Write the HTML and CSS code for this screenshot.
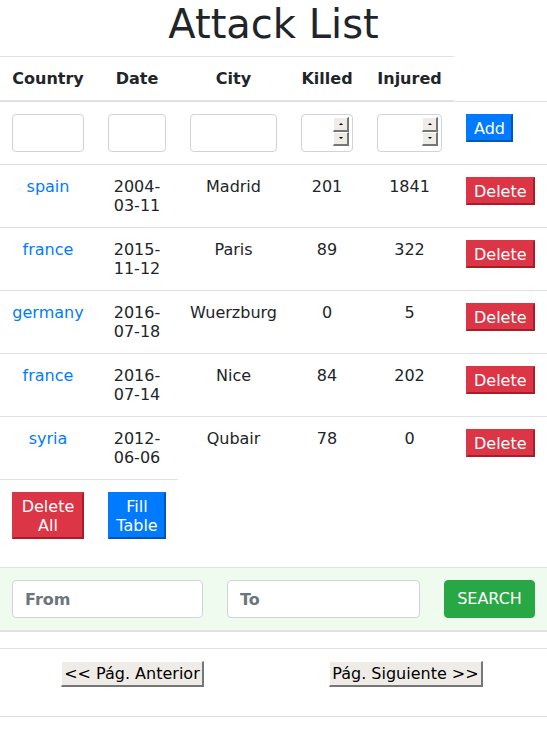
FILE: index.html
```html
<!DOCTYPE html>
<html lang="en">
<head>
<meta charset="utf-8">
<title>Attack List</title>
<link rel="stylesheet" href="styles.css">
</head>
<body>
<h1 class="title">Attack List</h1>

<table class="attacks">
  <colgroup>
    <col class="c-country"><col class="c-date"><col class="c-city"><col class="c-killed"><col class="c-injured"><col class="c-action">
  </colgroup>
  <thead>
    <tr>
      <th>Country</th><th>Date</th><th>City</th><th>Killed</th><th>Injured</th>
    </tr>
  </thead>
  <tbody>
    <tr>
      <td><input class="field" type="text"></td>
      <td><input class="field" type="text"></td>
      <td><input class="field" type="text"></td>
      <td>
        <div class="numbox">
          <input class="numfield" type="text">
          <div class="spin"><span class="spin-btn"><i class="up"></i></span><span class="spin-btn"><i class="down"></i></span></div>
        </div>
      </td>
      <td>
        <div class="numbox">
          <input class="numfield" type="text">
          <div class="spin"><span class="spin-btn"><i class="up"></i></span><span class="spin-btn"><i class="down"></i></span></div>
        </div>
      </td>
      <td class="action"><button class="btn-old blue">Add</button></td>
    </tr>
    <tr>
      <td><a href="#">spain</a></td><td>2004-03-11</td><td>Madrid</td><td>201</td><td>1841</td>
      <td class="action"><button class="btn-old red">Delete</button></td>
    </tr>
    <tr>
      <td><a href="#">france</a></td><td>2015-11-12</td><td>Paris</td><td>89</td><td>322</td>
      <td class="action"><button class="btn-old red">Delete</button></td>
    </tr>
    <tr>
      <td><a href="#">germany</a></td><td>2016-07-18</td><td>Wuerzburg</td><td>0</td><td>5</td>
      <td class="action"><button class="btn-old red">Delete</button></td>
    </tr>
    <tr>
      <td><a href="#">france</a></td><td>2016-07-14</td><td>Nice</td><td>84</td><td>202</td>
      <td class="action"><button class="btn-old red">Delete</button></td>
    </tr>
    <tr>
      <td><a href="#">syria</a></td><td>2012-06-06</td><td>Qubair</td><td>78</td><td>0</td>
      <td class="action"><button class="btn-old red">Delete</button></td>
    </tr>
    <tr>
      <td><button class="btn-old red">Delete All</button></td>
      <td><button class="btn-old blue">Fill Table</button></td>
    </tr>
  </tbody>
</table>

<div class="search">
  <input class="search-field" type="text" placeholder="From">
  <input class="search-field" type="text" placeholder="To">
  <button class="btn-search">SEARCH</button>
</div>

<table class="pager">
  <tr>
    <td class="pager-cell"><button class="btn-page">&lt;&lt; Pág. Anterior</button></td>
    <td class="pager-cell"><button class="btn-page">Pág. Siguiente &gt;&gt;</button></td>
  </tr>
  <tr>
    <td class="pager-empty"></td>
    <td class="pager-empty"></td>
  </tr>
</table>
</body>
</html>
```

FILE: styles.css
```css
html, body {
  margin: 0;
  padding: 0;
  background: #fff;
}
body {
  font-family: "DejaVu Sans", sans-serif;
  font-size: 16px;
  line-height: 19px;
  color: #212529;
}
.title {
  margin: 0 0 8px;
  font-size: 40px;
  font-weight: normal;
  line-height: 48px;
  text-align: center;
  color: #212529;
}

.attacks {
  width: 100%;
  table-layout: fixed;
  border-collapse: collapse;
  margin-bottom: 16px;
}
.c-country { width: 96px; }
.c-date { width: 82px; }
.c-city { width: 111px; }
.c-killed { width: 76px; }
.c-injured { width: 89px; }
.c-action { width: 93px; }

.attacks th,
.attacks td {
  padding: 12px;
  text-align: center;
  vertical-align: top;
  border-top: 1px solid #dee2e6;
}
.attacks td.action {
  text-align: left;
}
.attacks th {
  font-weight: bold;
  border-bottom: 2px solid #dee2e6;
}
.attacks a {
  color: #007bff;
  text-decoration: none;
}

.field {
  display: block;
  box-sizing: border-box;
  width: 100%;
  height: 38px;
  margin: 0;
  border: 1px solid #ced4da;
  border-radius: 4px;
  background: #fff;
  font: inherit;
  padding: 6px 12px;
}
.numbox {
  box-sizing: border-box;
  display: flex;
  width: 100%;
  height: 38px;
  border: 1px solid #ced4da;
  border-radius: 4px;
  background: #fff;
  padding: 2px 3px 5px 0;
}
.numfield {
  flex: 1;
  min-width: 0;
  border: 0;
  padding: 0;
  margin: 0;
  background: transparent;
  font: inherit;
}
.spin {
  display: flex;
  flex-direction: column;
  width: 16px;
}
.spin-btn {
  box-sizing: border-box;
  flex: 1;
  display: flex;
  align-items: center;
  justify-content: center;
  background: #efece8;
  border-style: solid;
  border-color: #fff #767676 #767676 #fff;
  border-width: 1px 2px 2px 1px;
}
.spin-btn i {
  width: 0;
  height: 0;
  border-left: 2px solid transparent;
  border-right: 2px solid transparent;
}
.spin-btn .up { border-bottom: 2px solid #000; }
.spin-btn .down { border-top: 2px solid #000; }

.btn-old {
  font: inherit;
  line-height: 19px;
  color: #fff;
  padding: 3px 6px 2px;
  margin: 0;
  border-width: 2px;
  border-style: solid;
  border-radius: 0;
  cursor: pointer;
}
.btn-old.red {
  background: #dc3545;
  border-color: #dc3545 #a71d2a #a71d2a #dc3545;
}
.btn-old.blue {
  background: #007bff;
  border-color: #007bff #0056b3 #0056b3 #007bff;
}

.search {
  display: grid;
  grid-template-columns: 191px 193px 91px;
  column-gap: 24px;
  padding: 12px;
  background: #effbef;
  border-top: 1px solid #dee2e6;
  border-bottom: 2px solid #dee2e6;
  margin-bottom: 16px;
}
.search-field {
  box-sizing: border-box;
  height: 38px;
  width: 100%;
  margin: 0;
  border: 1px solid #ced4da;
  border-radius: 4px;
  background: #fff;
  padding: 6px 12px;
  font: inherit;
  font-weight: bold;
  line-height: 24px;
}
.search-field::placeholder {
  color: #6c757d;
  opacity: 1;
}
.btn-search {
  box-sizing: border-box;
  height: 38px;
  margin: 0;
  padding: 6px 12px;
  border: 1px solid #28a745;
  border-radius: 4px;
  background: #28a745;
  color: #fff;
  font: inherit;
  line-height: 24px;
}

.pager {
  width: 100%;
  border-collapse: collapse;
}
.pager-cell {
  padding: 12px 12px 29px;
  text-align: center;
  vertical-align: top;
  border-top: 1px solid #dee2e6;
}
.pager-empty {
  padding: 12px;
  border-top: 1px solid #dee2e6;
}
.btn-page {
  font: inherit;
  line-height: 19px;
  color: #000;
  background: #efece8;
  margin: 0;
  padding: 2px 2px;
  border-style: solid;
  border-width: 1px 2px 2px 1px;
  border-color: #fff #767676 #767676 #fff;
  border-radius: 0;
}
```
